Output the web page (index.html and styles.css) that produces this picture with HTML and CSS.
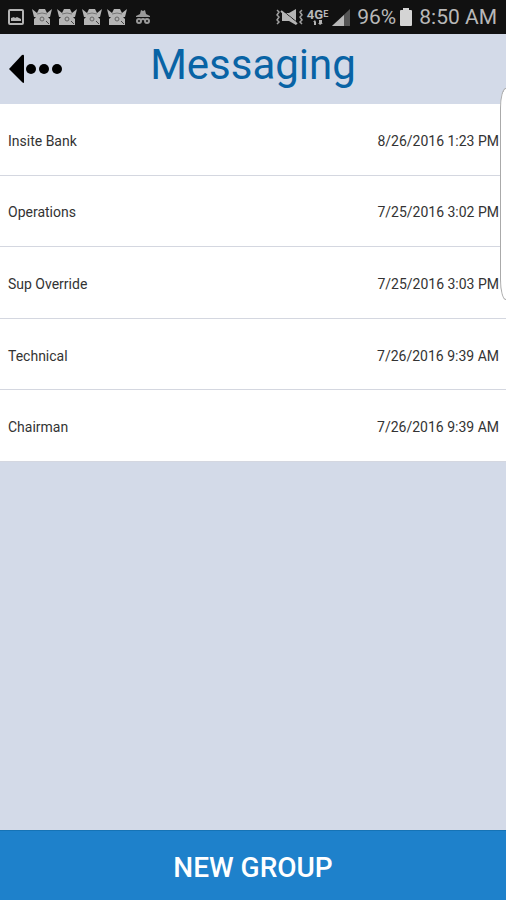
FILE: index.html
```html
<!DOCTYPE html>
<html lang="en">
<head>
  <meta charset="utf-8">
  <meta name="viewport" content="width=device-width, initial-scale=1">
  <title>Messaging</title>
  <link rel="stylesheet" href="styles.css">
</head>
<body>

  <!-- icon shapes used more than once -->
  <svg class="defs" aria-hidden="true">
    <symbol id="cat" viewBox="0 0 20 18">
      <path fill="#b4b4b4" d="M0 1 L5 5 L7 1 H13 L15 5 L20 1 L18 9 H16 L18 11 V17 H2 V11 L4 9 H2 Z"/>
      <path fill="none" stroke="#777" stroke-width="1" d="M5 6 Q10 4 15 6"/>
      <circle cx="10" cy="11" r="2" fill="none" stroke="#666"/>
      <path fill="none" stroke="#444" d="M14 13 L17 16"/>
    </symbol>
  </svg>

  <div class="status-bar">
    <div class="notifications">
      <svg width="16" height="16" viewBox="0 0 16 16">
        <rect x="1" y="1" width="14" height="14" rx="1" fill="none" stroke="#b4b4b4" stroke-width="2"/>
        <path fill="#b4b4b4" d="M3 12 V9 L6 8 L7 9 L9 8 L13 10 V12 Z"/>
      </svg>
      <svg width="20" height="18"><use href="#cat"/></svg>
      <svg width="20" height="18"><use href="#cat"/></svg>
      <svg width="20" height="18"><use href="#cat"/></svg>
      <svg width="20" height="18"><use href="#cat"/></svg>
      <svg class="spy" width="14" height="16" viewBox="0 0 14 16">
        <path fill="#999" d="M4 5 L5 1 L7 2 L9 1 L10 5 L14 7 V8 H0 V7 Z"/>
        <circle cx="3" cy="12" r="2" fill="none" stroke="#999" stroke-width="2"/>
        <circle cx="11" cy="12" r="2" fill="none" stroke="#999" stroke-width="2"/>
        <path fill="none" stroke="#999" stroke-width="2" d="M5 11 Q7 9 9 11"/>
      </svg>
    </div>
    <div class="system">
      <svg width="27" height="18" viewBox="0 0 27 18">
        <path fill="none" stroke="#a0a0a0" stroke-width="1.5" d="M1 2 L3 4 L1 7 L3 9 L1 12 L3 14 L1 16 M26 2 L24 4 L26 7 L24 9 L26 12 L24 14 L26 16"/>
        <path fill="#b4b4b4" d="M6 5 H13 L20 1 V17 L13 13 H6 Z"/>
        <path stroke="#111" stroke-width="1" d="M7 3 L22 15"/>
        <path stroke="#b4b4b4" stroke-width="2" d="M5 3 L21 16"/>
      </svg>
      <div class="network">
        <span>4G<small>E</small></span>
        <svg width="10" height="5" viewBox="0 0 10 5"><path fill="#b4b4b4" d="M1 5 V2 H0 L2 0 L3 2 V5 Z M6 0 H9 V3 H10 L7 5 L5 3 H6 Z"/></svg>
      </div>
      <svg class="signal" width="18" height="17" viewBox="0 0 18 17">
        <path fill="#555" d="M0 17 L18 0 V17 Z"/>
        <path fill="#b8b8b8" d="M0 17 L12 6 V17 Z"/>
      </svg>
      <span class="percent">96%</span>
      <svg class="battery" width="12" height="18" viewBox="0 0 12 18"><path fill="#d4d4d4" d="M0 3 Q0 2 1 2 H3 V0 H9 V2 H11 Q12 2 12 3 V17 Q12 18 11 18 H1 Q0 18 0 17 Z"/></svg>
      <span class="clock">8:50 AM</span>
    </div>
  </div>

  <header class="header">
    <button class="back" type="button" aria-label="Back">
      <svg width="54" height="30" viewBox="0 0 54 30">
        <path d="M0 15 L13 1 Q15 0 15 2 V28 Q15 30 13 28 Z"/>
        <circle cx="22" cy="15" r="5"/>
        <circle cx="35" cy="15" r="5"/>
        <circle cx="48" cy="15" r="5"/>
      </svg>
    </button>
    <h1>Messaging</h1>
  </header>

  <main>
    <ul class="groups">
      <li><span>Insite Bank</span><time>8/26/2016 1:23 PM</time></li>
      <li><span>Operations</span><time>7/25/2016 3:02 PM</time></li>
      <li><span>Sup Override</span><time>7/25/2016 3:03 PM</time></li>
      <li><span>Technical</span><time>7/26/2016 9:39 AM</time></li>
      <li><span>Chairman</span><time>7/26/2016 9:39 AM</time></li>
    </ul>
    <div class="edge-handle"></div>
  </main>

  <button class="new-group" type="button">NEW GROUP</button>

</body>
</html>
```
FILE: styles.css
```css
* {
  box-sizing: border-box;
}

body {
  display: flex;
  flex-direction: column;
  min-height: 100vh;
  margin: 0;
  background: #d3dae8;
  color: #333;
  font-family: Roboto, sans-serif;
}

.defs {
  position: absolute;
  width: 0;
  height: 0;
}

.status-bar {
  display: flex;
  justify-content: space-between;
  align-items: center;
  height: 34px;
  padding: 0 9px 0 8px;
  background: #111;
  color: #b8b8b8;
  font-size: 21px;
}

.notifications {
  display: flex;
  align-items: center;
  gap: 5px;
}

.notifications .spy {
  margin-left: 4px;
}

.notifications svg:first-child {
  margin-right: 3px;
}

.system {
  display: flex;
  align-items: center;
  gap: 4px;
  white-space: nowrap;
}

.network {
  display: flex;
  flex-direction: column;
  align-items: center;
  font-size: 13px;
  font-weight: bold;
  line-height: 11px;
}

.network small {
  font-size: 9px;
  vertical-align: top;
}

.percent,
.clock {
  margin-left: 3px;
}

.header {
  display: grid;
  grid-template-columns: 1fr auto 1fr;
  height: 70px;
  padding: 0 9px;
}

.back {
  justify-self: start;
  align-self: center;
  padding: 0;
  border: none;
  background: none;
  cursor: pointer;
}

.back svg {
  display: block;
}

.header h1 {
  margin: 0;
  color: #0863a5;
  font-size: 42px;
  font-weight: normal;
  line-height: 62px;
}

main {
  position: relative;
  flex: 1;
}

.groups {
  display: flex;
  flex-direction: column;
  min-height: 358px;
  margin: 0;
  padding: 0;
  list-style: none;
  background: #fff;
}

.groups li {
  display: flex;
  flex: 1;
  justify-content: space-between;
  align-items: center;
  padding: 3px 7px 0 8px;
  border-bottom: 1px solid #d4d7e0;
  font-size: 14px;
}

/* edge panel that slides in from the right */
.edge-handle {
  position: absolute;
  top: -16px;
  right: 0;
  width: 6px;
  height: 212px;
  border: 1px solid #aaa;
  border-right: none;
  border-radius: 6px 0 0 6px / 20px 0 0 20px;
  background: #fff;
}

.new-group {
  height: 70px;
  padding: 3px 0 0;
  border: none;
  border-top: 1px solid #1673b5;
  background: #1e81cb;
  color: #fff;
  font-family: inherit;
  font-size: 28px;
  font-weight: 500;
  cursor: pointer;
}
```
